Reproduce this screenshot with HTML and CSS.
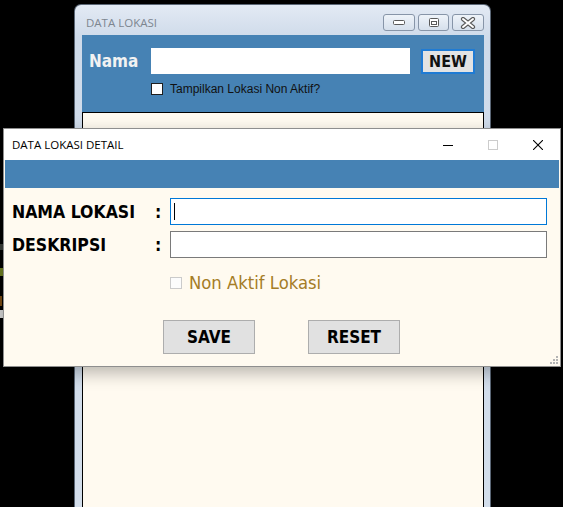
FILE: index.html
```html
<!DOCTYPE html>
<html lang="id">
<head>
<meta charset="utf-8">
<title>DATA LOKASI</title>
<link rel="stylesheet" href="styles.css">
</head>
<body>
<div class="desk">
  <div class="bits">
    <span class="bit bit-dark"></span>
    <span class="bit bit-green"></span>
    <span class="bit bit-orange"></span>
    <span class="bit bit-light"></span>
  </div>

  <section class="win7">
    <header class="w7-title">
      <span class="w7-caption">DATA LOKASI</span>
      <div class="w7-ctrls">
        <span class="w7-btn w7-min">
          <svg width="14" height="7" viewBox="0 0 14 7"><rect x="1.5" y="1.5" width="11" height="4" rx="1" fill="#fff" stroke="#5a5a5a"/></svg>
        </span>
        <span class="w7-btn w7-max">
          <svg width="12" height="11" viewBox="0 0 12 11"><rect x="1.5" y="1.5" width="9" height="8" rx="1" fill="#fff" stroke="#5a5a5a"/><rect x="3.5" y="4.5" width="5" height="3" fill="#fff" stroke="#5a5a5a"/></svg>
        </span>
        <span class="w7-btn w7-close">
          <svg width="16" height="12" viewBox="0 0 16 12"><path d="M3 2 L13 10 M13 2 L3 10" stroke="#5a5a5a" stroke-width="4.2" stroke-linecap="round"/><path d="M3 2 L13 10 M13 2 L3 10" stroke="#fff" stroke-width="2" stroke-linecap="round"/></svg>
        </span>
      </div>
    </header>
    <div class="w7-client">
      <div class="search">
        <div class="search-row">
          <span class="nama">Nama</span>
          <div class="tb tb-nama"></div>
          <span class="btn-new">NEW</span>
        </div>
        <div class="chk-row">
          <span class="cb cb-dark"></span>
          <span class="chk-text">Tampilkan Lokasi Non Aktif?</span>
        </div>
      </div>
      <div class="list"></div>
    </div>
  </section>

  <section class="win10">
    <header class="w10-title">
      <span class="w10-caption">DATA LOKASI DETAIL</span>
      <div class="w10-ctrls">
        <span class="w10-btn">
          <svg width="10" height="10" viewBox="0 0 10 10"><path d="M0 5.5 H10" stroke="#000" stroke-width="1"/></svg>
        </span>
        <span class="w10-btn">
          <svg width="10" height="10" viewBox="0 0 10 10"><rect x="0.5" y="0.5" width="9" height="9" fill="none" stroke="#cccccc" stroke-width="1"/></svg>
        </span>
        <span class="w10-btn">
          <svg width="10" height="10" viewBox="0 0 10 10"><path d="M0 0 L10 10 M10 0 L0 10" stroke="#000" stroke-width="1.1"/></svg>
        </span>
      </div>
    </header>
    <div class="w10-body">
      <div class="bluebar"></div>
      <div class="form">
        <span class="lbl">NAMA LOKASI</span>
        <span class="colon">:</span>
        <div class="tb tb-focus"><span class="caret"></span></div>
        <span class="lbl">DESKRIPSI</span>
        <span class="colon">:</span>
        <div class="tb tb-plain"></div>
      </div>
      <div class="nonaktif">
        <span class="cb cb-disabled"></span>
        <span class="nonaktif-text">Non Aktif Lokasi</span>
      </div>
      <div class="actions">
        <span class="btn">SAVE</span>
        <span class="btn">RESET</span>
      </div>
      <svg class="grip" width="8" height="8" viewBox="0 0 8 8">
        <rect x="6" y="0" width="2" height="2" fill="#b4b4b4"/>
        <rect x="3" y="3" width="2" height="2" fill="#b4b4b4"/>
        <rect x="6" y="3" width="2" height="2" fill="#b4b4b4"/>
        <rect x="0" y="6" width="2" height="2" fill="#b4b4b4"/>
        <rect x="3" y="6" width="2" height="2" fill="#b4b4b4"/>
        <rect x="6" y="6" width="2" height="2" fill="#b4b4b4"/>
      </svg>
    </div>
  </section>
</div>
</body>
</html>
```

FILE: styles.css
```css
* { box-sizing: border-box; }

html, body {
  margin: 0;
  padding: 0;
  background: #000;
}

.desk {
  position: relative;
  width: 563px;
  height: 507px;
  overflow: hidden;
  background: #000;
}

/* desktop remnants at the left edge */
.bits { position: absolute; left: 0; top: 240px; width: 3px; height: 90px; }
.bit { position: absolute; left: 0; width: 3px; display: block; }
.bit-dark { top: 4px; height: 6px; background: #3c3f3a; }
.bit-green { top: 28px; height: 8px; background: #6f7f22; }
.bit-orange { top: 56px; height: 10px; background: #7a4d16; width: 2px; }
.bit-light { top: 70px; height: 8px; background: #d8d8d8; }

/* ---------- back window (Windows 7 basic) ---------- */
.win7 {
  position: absolute;
  left: 74px;
  top: 4px;
  width: 417px;
  height: 520px;
  border: 1px solid #5b6776;
  border-bottom: none;
  border-radius: 7px 7px 0 0;
  background: linear-gradient(#e3eaf4, #cfdbea 32px, #d3deeb);
  padding: 0 6px 0 7px;
  display: flex;
  flex-direction: column;
}

.w7-title {
  height: 30px;
  display: flex;
  align-items: flex-start;
  flex-shrink: 0;
}

.w7-caption {
  margin-left: 4px;
  padding-top: 10px;
  line-height: 16px;
  font-family: "Open Sans", "Noto Sans", sans-serif;
  font-size: 11.5px;
  color: #7d8690;
}

.w7-ctrls {
  margin-left: auto;
  margin-top: 9px;
  display: flex;
  gap: 3px;
}

.w7-btn {
  height: 17px;
  border: 1px solid #8795a8;
  border-radius: 3px;
  background: linear-gradient(#eef3f9, #d6e0ec);
  display: flex;
  align-items: center;
  justify-content: center;
}
.w7-min { width: 32px; }
.w7-max { width: 31px; }
.w7-close { width: 32px; }

.w7-client {
  flex: 1;
  display: flex;
  flex-direction: column;
}

.search {
  height: 77px;
  background: #4682b4;
  padding: 13px 0 0 7px;
  flex-shrink: 0;
}

.search-row {
  display: flex;
  align-items: flex-start;
}

.nama {
  width: 62px;
  line-height: 26px;
  font-family: "DejaVu Sans Condensed", "DejaVu Sans", sans-serif;
  font-stretch: condensed;
  font-weight: bold;
  font-size: 17px;
  color: #f2f2f2;
}

.tb {
  background: #fff;
}

.tb-nama {
  width: 259px;
  height: 26px;
}

.btn-new {
  margin-left: 11px;
  margin-top: 1px;
  width: 54px;
  height: 25px;
  border: 2px solid #1f7bd4;
  background: #e3e3e3;
  display: flex;
  align-items: center;
  justify-content: center;
  font-family: "DejaVu Sans Condensed", "DejaVu Sans", sans-serif;
  font-stretch: condensed;
  font-weight: bold;
  font-size: 16px;
  color: #111;
}

.chk-row {
  margin-top: 9px;
  padding-left: 62px;
  display: flex;
  align-items: center;
  height: 12px;
}

.cb {
  width: 12px;
  height: 12px;
  display: block;
  flex-shrink: 0;
}

.cb-dark {
  border: 1px solid #1e1e1e;
  background: #fff;
}

.chk-text {
  margin-left: 7px;
  font-family: "Liberation Sans", Arial, sans-serif;
  font-size: 12px;
  color: #111;
  line-height: 12px;
}

.list {
  flex: 1;
  border: 1px solid #000;
  background: #fffaf0;
}

/* ---------- front window (Windows 10) ---------- */
.win10 {
  position: absolute;
  left: 3px;
  top: 128px;
  width: 558px;
  height: 239px;
  border: 1px solid #8e8e8e;
  background: #fffaf0;
  box-shadow: 0 6px 16px rgba(0, 0, 0, 0.28);
  display: flex;
  flex-direction: column;
}

.w10-title {
  height: 31px;
  background: #fff;
  display: flex;
  align-items: center;
  flex-shrink: 0;
}

.w10-caption {
  padding-left: 8px;
  font-family: "Open Sans", "Noto Sans", sans-serif;
  font-size: 11.5px;
  color: #000;
}

.w10-ctrls {
  margin-left: auto;
  display: flex;
  height: 31px;
}

.w10-btn {
  width: 45px;
  height: 31px;
  display: flex;
  align-items: center;
  justify-content: center;
}

.w10-body {
  position: relative;
  flex: 1;
  display: flex;
  flex-direction: column;
}

.bluebar {
  height: 28px;
  margin: 0 1px;
  background: #4682b4;
}

.form {
  margin-top: 10px;
  padding-left: 8px;
  display: grid;
  grid-template-columns: 143px 15px 377px;
  grid-auto-rows: 27px;
  row-gap: 6px;
  align-items: center;
}

.lbl, .colon {
  font-family: "DejaVu Sans Condensed", "DejaVu Sans", sans-serif;
  font-stretch: condensed;
  font-weight: bold;
  font-size: 17.5px;
  color: #000;
  line-height: 20px;
}

.form .tb {
  height: 27px;
  align-self: stretch;
}

.tb-focus {
  border: 1px solid #0078d7;
  padding: 4px 0 0 3px;
}

.caret {
  display: block;
  width: 1px;
  height: 17px;
  background: #000;
}

.tb-plain {
  border: 1px solid #7a7a7a;
}

.nonaktif {
  margin-top: 19px;
  margin-left: 166px;
  height: 12px;
  display: flex;
  align-items: center;
}

.cb-disabled {
  border: 1px solid #cbcbcb;
  background: #fcfcfc;
}

.nonaktif-text {
  margin-left: 7px;
  font-family: "DejaVu Sans Condensed", "DejaVu Sans", sans-serif;
  font-stretch: condensed;
  font-size: 18.3px;
  line-height: 20px;
  color: #a57d27;
}

.actions {
  margin-top: 31px;
  padding-left: 159px;
  display: flex;
  gap: 53px;
}

.btn {
  width: 92px;
  height: 34px;
  border: 1px solid #adadad;
  background: #e1e1e1;
  display: flex;
  align-items: center;
  justify-content: center;
  font-family: "DejaVu Sans Condensed", "DejaVu Sans", sans-serif;
  font-stretch: condensed;
  font-weight: bold;
  font-size: 17px;
  color: #000;
}

.grip {
  position: absolute;
  right: 2px;
  bottom: 2px;
}
```
